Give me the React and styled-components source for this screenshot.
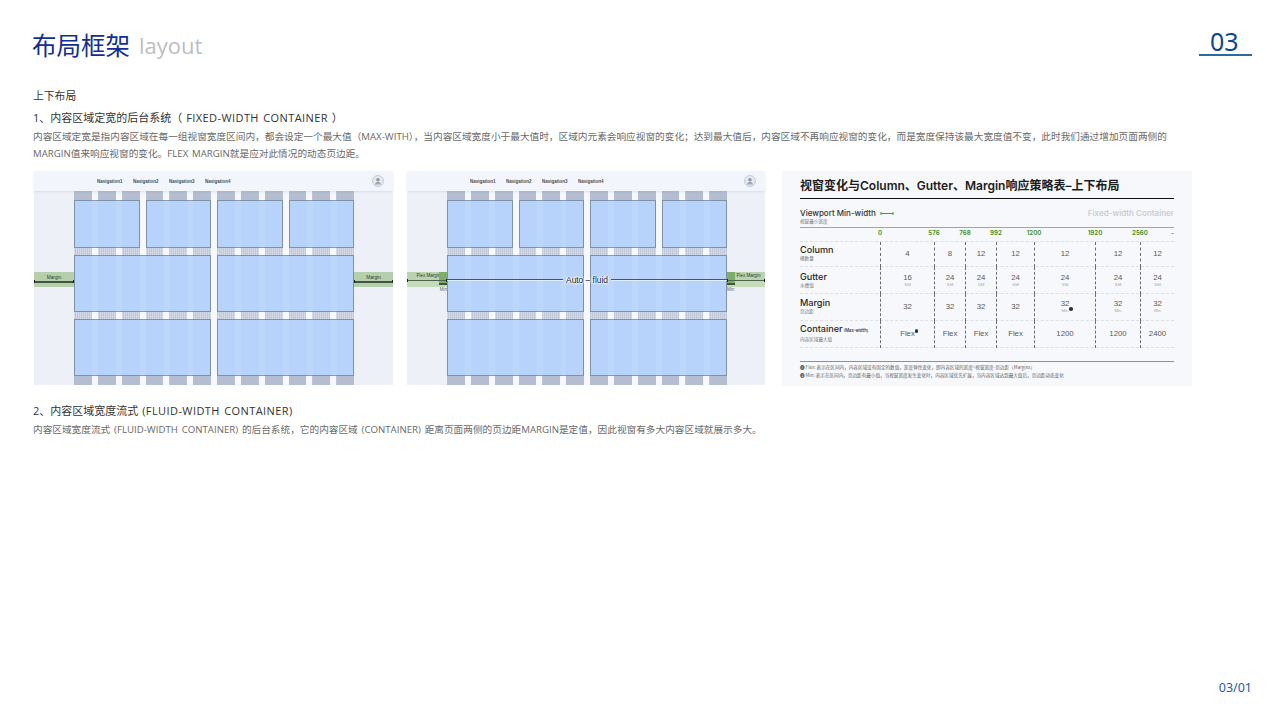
import React from "react";
import styled, { createGlobalStyle } from "styled-components";

const Global = createGlobalStyle`
  html, body { margin: 0; padding: 0; background: #fff; }
  body { font-family: "Open Sans", "Noto Sans CJK SC", sans-serif; }
`;
const LATIN = `"Inter", "Noto Sans CJK SC", sans-serif`;
const BODY = `"Open Sans", "Noto Sans CJK SC", sans-serif`;

const Page = styled.div`
  width: 1280px; height: 720px; position: relative; overflow: hidden;
  display: flex; flex-direction: column; box-sizing: border-box; padding: 0 28px 0 33px;
`;
const Header = styled.header`
  display: flex; justify-content: space-between; align-items: flex-start; height: 89px;
`;
const TitleGroup = styled.div`display: flex; align-items: baseline; margin-top: 27px; margin-left: -1px;`;
const Title = styled.h1`margin: 0; font-weight: 400; font-size: 24.5px; line-height: 36px; color: #0f2f92; font-family: "Noto Sans CJK SC", sans-serif;`;
const TitleEn = styled.span`margin-left: 9px; position: relative; top: -1px; font-family: "Open Sans", sans-serif; font-weight: 400; font-size: 22px; color: #bcbec2;`;
const PageNo = styled.div`
  width: 53px; height: 29px; margin-top: 27px; box-sizing: border-box; padding-left: 11px;
  font-family: "Noto Sans", sans-serif; font-size: 25px; line-height: 29px; color: #0f4a86;
  border-bottom: 2px solid #2a6aa0;
`;
const Lead = styled.div`font-size: 10.8px; line-height: 14px; color: #333; margin-bottom: 7px;`;
const Heading = styled.h2`margin: 0 0 2px; font-weight: 400; font-size: 11px; line-height: 16px; color: #333; font-family: ${BODY}; word-spacing: 1px;`;
const Wide = styled.span`letter-spacing: .42px;`;
const Desc = styled.p`margin: 0; width: 1145px; font-size: 9.66px; word-spacing: 1.3px; line-height: 17px; color: #6a6a6a; font-family: ${BODY};`;
const Figures = styled.div`display: flex; margin-top: 9px; margin-left: 1px; margin-bottom: 17px;`;
const Footer = styled.footer`margin-top: auto; margin-bottom: 24px; text-align: right; font-family: "Noto Sans", sans-serif; font-size: 12.5px; line-height: 16px; color: #2560a6;`;

/* wireframe */
const Wire = styled.figure`
  margin: 0 ${p => p.$gap}px 0 0; width: ${p => p.$w}px; height: 214px; flex: none;
  display: flex; flex-direction: column; background: #edf1f7;
`;
const TopBar = styled.div`
  height: 20px; flex: none; display: flex; align-items: center; padding: 0 9px 0 63px; position: relative; z-index: 3;
  background: #f2f6fc; box-shadow: 0 1px 2px rgba(120,130,150,.18);
`;
const NavItem = styled.span`width: 36px; font-family: "Liberation Sans", sans-serif; font-size: 4.5px; font-weight: 700; color: #2b2f36; opacity: .85;`;
const Avatar = styled.svg`margin-left: auto; width: 12px; height: 12px;`;
const WireBody = styled.div`flex: 1; display: flex;`;
const Side = styled.div`flex: none; width: ${p => p.$w}px; position: relative; padding-top: ${p => p.$top}px;`;
const MarginBar = styled.div`
  height: 15px; position: relative; background: #b5cfac; text-align: center;
  font-family: "Liberation Sans", sans-serif; font-size: 4.8px; line-height: 11px; color: #33402f;
`;
const FlexBar = styled.div`
  height: 15px; position: relative; font-family: "Liberation Sans", sans-serif; font-size: 4.6px; line-height: 8px; color: #33402f;
  box-sizing: border-box; padding-left: 9.500px;
  background: linear-gradient(#b8d3ae 0 8px, #c4dab9 8px);
`;
const MinBlock = styled.div`
  position: absolute; top: 0; height: 13px; width: 8px; ${p => p.$right ? "left: 0;" : "right: 0;"}
  background: linear-gradient(#7dad68 0 11.500px, #3a5a38 11.500px);
`;
const MinText = styled.span`
  position: absolute; top: 15.5px; ${p => p.$right ? "left: 0;" : "right: 0;"} font-size: 4.5px; line-height: 6px; color: #666;
`;
const Measure = styled.div`
  position: absolute; left: 0; right: 0; top: ${p => p.$thin ? 8 : 9}px; height: ${p => p.$thin ? 1 : 1.5}px; background: ${p => p.$thin ? "#4f6350" : "#44553f"};
  &::before, &::after { content: ""; position: absolute; top: -1px; width: 1px; height: 3px; background: #222; }
  &::before { left: 0; } &::after { right: 0; }
`;
const Stage = styled.div`
  flex: 1; position: relative; background: #f5f7fb; display: flex; flex-direction: column;
  &::after {
    content: ""; position: absolute; inset: 0; z-index: 2; pointer-events: none;
    background: repeating-linear-gradient(to right, transparent 0 17.9px, rgba(255,255,255,.09) 17.9px 23.9px);
  }
`;
const Columns = styled.div`position: absolute; inset: 0; display: grid; grid-template-columns: repeat(12, 1fr); column-gap: 6px;`;
const Col = styled.div`background: #b5bed1;`;
const Rows = styled.div`position: relative; z-index: 1; display: flex; flex-direction: column; padding-top: 8.7px;`;
const Row = styled.div`display: grid; grid-template-columns: repeat(${p => p.$cols}, 1fr); column-gap: 6px; height: ${p => p.$h}px;`;
const Card = styled.div`background: #b7d3fb; border: 1px solid #7d91a7; box-sizing: border-box;`;
const Band = styled.div`height: 7px; background: repeating-linear-gradient(90deg, rgba(245,247,251,.45) 0 1px, rgba(245,247,251,.2) 1px 2px);`;
const Fluid = styled.div`
  position: absolute; left: 0; right: 0; top: 82.7px; z-index: 3; display: flex; align-items: center;
  font-family: "Liberation Sans", sans-serif; font-size: 8.4px; line-height: 12px; color: #141f2c;
  text-shadow: 0 0 2px #fff, 0 0 2px #fff, 0 0 3px #fff, 0 0 3px #fff;
`;
const FluidLine = styled.div`flex: 1; height: 1px; background: #45566c; box-shadow: 0 1px 0 rgba(255,255,255,.6);`;
const FluidText = styled.span`padding: 0 3px;`;

const Wireframe = ({ w, gap, fluid }) => (
  <Wire $w={w} $gap={gap}>
    <TopBar>
      {[1, 2, 3, 4].map(n => <NavItem key={n}>Navigation{n}</NavItem>)}
      <Avatar viewBox="0 0 24 24">
        <circle cx="12" cy="12" r="11" fill="#e6e9ef" stroke="#b6bcc6" strokeWidth="1.4" />
        <circle cx="12" cy="9.5" r="3.6" fill="#8d9bb0" />
        <path d="M6 19c.6-4 3-5.5 6-5.5s5.400 1.500 6 5.500z" fill="#9aa7ba" />
      </Avatar>
    </TopBar>
    <WireBody>
      <Side $w={40} $top={fluid ? 80.7 : 81}>
        {fluid ? (
          <FlexBar>Flex Margin<MinBlock /><MinText>Min</MinText><Measure $thin /></FlexBar>
        ) : (
          <MarginBar>Margin<Measure /></MarginBar>
        )}
      </Side>
      <Stage>
        <Columns>{Array.from({ length: 12 }, (_, i) => <Col key={i} />)}</Columns>
        <Rows>
          <Row $cols={4} $h={48.7}><Card /><Card /><Card /><Card /></Row>
          <Band />
          <Row $cols={2} $h={56.7}><Card /><Card /></Row>
          <Band />
          <Row $cols={2} $h={56.7}><Card /><Card /></Row>
        </Rows>
        {fluid && <Fluid><FluidLine /><FluidText>Auto – fluid</FluidText><FluidLine /></Fluid>}
      </Stage>
      <Side $w={fluid ? 38 : 39} $top={fluid ? 80.7 : 81}>
        {fluid ? (
          <FlexBar $right>Flex Margin<MinBlock $right /><MinText $right>Min</MinText><Measure $thin /></FlexBar>
        ) : (
          <MarginBar>Margin<Measure /></MarginBar>
        )}
      </Side>
    </WireBody>
  </Wire>
);

/* table */
const TRACKS = "80px 54px 31px 31px 38px 61px 45px 34px";
const Sheet = styled.figure`
  margin: 0; width: 410px; height: 215px; flex: none; box-sizing: border-box; padding: 8px 18px 0; background: #f6f8fb;
  font-family: ${LATIN};
`;
const SheetTitle = styled.div`
  font-size: 12px; line-height: 14px; font-weight: 600; color: #1c1c1c; padding-bottom: 5px; border-bottom: 1.5px solid #111;
  font-family: "Inter", "Noto Sans CJK SC", sans-serif;
`;
const Viewport = styled.div`display: flex; justify-content: space-between; height: 28px; box-sizing: border-box; padding-top: 10px;`;
const ViewLabel = styled.div`font-size: 8px; line-height: 8.500px; font-weight: 500; color: #333; display: flex; flex-wrap: wrap; align-content: flex-start; width: 120px; column-gap: 4px; align-items: center;`;
const MiniArrow = styled.svg`width: 14px; height: 5px;`;
const Sub = styled.div`flex-basis: 100%; font-size: 4.6px; line-height: 6px; font-weight: 400; color: #777; font-family: "Noto Sans CJK SC", sans-serif;`;
const Fixed = styled.div`font-size: 8.1px; line-height: 8.500px; font-weight: 500; color: #c7c9cd;`;
const Axis = styled.div`
  display: grid; grid-template-columns: ${TRACKS}; height: 13.500px; border-top: 1px solid #8fb77a; box-sizing: border-box;
  font-size: 6.200px; line-height: 10px; font-weight: 600; color: #3e8a18;
`;
const Tick = styled.span`grid-column: ${p => p.$col}; grid-row: 1; justify-self: ${p => p.$end ? "end" : "start"}; transform: ${p => p.$end ? "none" : "translateX(-50%)"};`;
const TableRow = styled.div`
  display: grid; grid-template-columns: ${TRACKS}; height: 26.75px; box-sizing: border-box;
  border-bottom: 1px dashed #dcdfe4; ${p => p.$first && "border-top: 1px dashed #dcdfe4;"}
`;
const RowLabel = styled.div`font-size: 9.100px; line-height: 10px; font-weight: 500; color: #262626; display: flex; flex-direction: column; justify-content: center;`;
const Small = styled.span`font-size: 4.2px; font-weight: 500;`;
const RowSub = styled.span`font-size: 4.6px; line-height: 7px; font-weight: 400; color: #777; font-family: "Noto Sans CJK SC", sans-serif;`;
const Cell = styled.div`
  position: relative; display: flex; flex-direction: column; align-items: center; justify-content: center; margin-bottom: -1px;
  border-left: 1.2px dashed #6e6e6e; font-family: "Liberation Sans", sans-serif; font-size: 7.800px; line-height: 8px; color: #5a5a5a; box-sizing: border-box;
`;
const CellSub = styled.span`font-size: 4.4px; line-height: 6px; color: #aaa;`;
const ValWrap = styled.span`position: relative;`;
const Dot = styled.i`position: absolute; width: 3.5px; height: 3.5px; border-radius: 50%; background: #333; right: -3.5px; top: ${p => p.$low ? "7px" : "-1px"};`;
const NoteRule = styled.div`margin-top: 13px; border-top: 1px solid #8f8f8f; padding-top: 1px;`;
const Note = styled.div`font-size: 4.6px; line-height: 8px; color: #666; font-family: "Noto Sans CJK SC", sans-serif; white-space: nowrap;`;

const TICKS = ["0", "576", "768", "992", "1200", "1920", "2560"];
const ROWS = [
  { label: "Column", sub: "栅数量", vals: ["4", "8", "12", "12", "12", "12", "12"] },
  { label: "Gutter", sub: "水槽值", vals: ["16", "24", "24", "24", "24", "24", "24"], subs: Array(7).fill("SM") },
  { label: "Margin", sub: "页边距", vals: ["32", "32", "32", "32", "32", "32", "32"], subs: ["", "", "", "", "Min", "Min", "Min"], dot: 4 },
  { label: "Container", extra: " (Max-width)", sub: "内容区域最大值", vals: ["Flex", "Flex", "Flex", "Flex", "1200", "1200", "2400"], dot: 0 },
];

const Table = () => (
  <Sheet>
    <SheetTitle>视窗变化与Column、Gutter、Margin响应策略表–上下布局</SheetTitle>
    <Viewport>
      <ViewLabel>
        Viewport Min-width
        <MiniArrow viewBox="0 0 14 5"><path d="M1 2.500h12M1 1v3M13 1v3" stroke="#4f9a2e" strokeWidth="1" fill="none" /></MiniArrow>
        <Sub>视窗最小宽度</Sub>
      </ViewLabel>
      <Fixed>Fixed-width Container</Fixed>
    </Viewport>
    <Axis>
      {TICKS.map((t, i) => <Tick key={t} $col={i + 2}>{t}</Tick>)}
      <Tick $col={8} $end>-</Tick>
    </Axis>
    {ROWS.map((r, ri) => (
      <TableRow key={r.label} $first={ri === 0}>
        <RowLabel>
          <span>{r.label}{r.extra && <Small>{r.extra}</Small>}</span>
          <RowSub>{r.sub}</RowSub>
        </RowLabel>
        {r.vals.map((v, i) => (
          <Cell key={i}>
            <ValWrap>{v}{r.dot === i && <Dot $low={ri === 2} />}</ValWrap>
            {r.subs && r.subs[i] && <CellSub>{r.subs[i]}</CellSub>}
          </Cell>
        ))}
      </TableRow>
    ))}
    <NoteRule>
      <Note>❶ Flex: 表示在区间内，内容区域没有固定的数值，宽度弹性变化，即内容区域的宽度=视窗宽度-页边距（Margins）</Note>
      <Note>❷ Min: 表示在区间内，页边距有最小值，当视窗宽度发生变化时，内容区域优先扩展，当内容区域达到最大值后，页边距动态变化</Note>
    </NoteRule>
  </Sheet>
);

export default function App() {
  return (
    <Page>
      <Global />
      <Header>
        <TitleGroup><Title>布局框架</Title><TitleEn>layout</TitleEn></TitleGroup>
        <PageNo>03</PageNo>
      </Header>
      <Lead>上下布局</Lead>
      <Heading>1、内容区域定宽的后台系统（ <Wide>FIXED-WIDTH CONTAINER</Wide> ）</Heading>
      <Desc>内容区域定宽是指内容区域在每一组视窗宽度区间内，都会设定一个最大值（MAX-WITH），当内容区域宽度小于最大值时，区域内元素会响应视窗的变化；达到最大值后，内容区域不再响应视窗的变化，而是宽度保持该最大宽度值不变，此时我们通过增加页面两侧的MARGIN值来响应视窗的变化。FLEX MARGIN就是应对此情况的动态页边距。</Desc>
      <Figures>
        <Wireframe w={359} gap={14} />
        <Wireframe w={358} gap={17} fluid />
        <Table />
      </Figures>
      <Heading>2、内容区域宽度流式 <Wide>(FLUID-WIDTH CONTAINER)</Wide></Heading>
      <Desc>内容区域宽度流式 (FLUID-WIDTH CONTAINER) 的后台系统，它的内容区域 (CONTAINER) 距离页面两侧的页边距MARGIN是定值，因此视窗有多大内容区域就展示多大。</Desc>
      <Footer>03/01</Footer>
    </Page>
  );
}
